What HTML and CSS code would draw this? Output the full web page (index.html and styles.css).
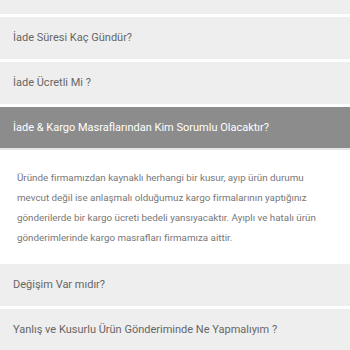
FILE: index.html
```html
<!DOCTYPE html>
<html lang="tr">
<head>
  <meta charset="UTF-8" />
  <meta name="viewport" content="width=device-width, initial-scale=1.0" />
  <title>Sıkça Sorulan Sorular</title>
  <link rel="stylesheet" href="styles.css">
</head>
<body>

  <!-- SSS listesi -->
  <div class="faq">
    <div class="faq-item">
      <div class="faq-title">İade İşlemini Nasıl Yapabilirim, Süreç Nasıl İşliyor?</div>
    </div>
    <div class="faq-item">
      <div class="faq-title">İade Süresi Kaç Gündür?</div>
    </div>
    <div class="faq-item">
      <div class="faq-title">İade Ücretli Mi ?</div>
    </div>
    <div class="faq-item open">
      <div class="faq-title">İade &amp; Kargo Masraflarından Kim Sorumlu Olacaktır?</div>
      <div class="faq-body">
        Üründe firmamızdan kaynaklı herhangi bir kusur, ayıp ürün durumu mevcut değil ise anlaşmalı olduğumuz kargo firmalarının yaptığınız gönderilerde bir kargo ücreti bedeli yansıyacaktır. Ayıplı ve hatalı ürün gönderimlerinde kargo masrafları firmamıza aittir.
      </div>
    </div>
    <div class="faq-item">
      <div class="faq-title">Değişim Var mıdır?</div>
    </div>
    <div class="faq-item">
      <div class="faq-title">Yanlış ve Kusurlu Ürün Gönderiminde Ne Yapmalıyım ?</div>
    </div>
  </div>

</body>
</html>
```

FILE: styles.css
```css
* { box-sizing: border-box; }

html, body {
  margin: 0;
  padding: 0;
  background: #fff;
  font-family: Roboto, 'Noto Sans', sans-serif;
}

.faq {
  margin-top: -28px;
  display: flex;
  flex-direction: column;
  gap: 3px;
}

.faq-title {
  height: 42px;
  line-height: 42px;
  padding: 0 13px;
  background: #eeeeee;
  color: #666;
  font-size: 11px;
  white-space: nowrap;
  overflow: hidden;
}

.open .faq-title {
  background: #8c8c8c;
  color: #fff;
  border-bottom: 2px solid #e6e6e6;
  height: 43px;
}

.faq-body {
  padding: 18px 17px 13px;
  color: #777;
  font-size: 9.8px;
  line-height: 20px;
}
```
